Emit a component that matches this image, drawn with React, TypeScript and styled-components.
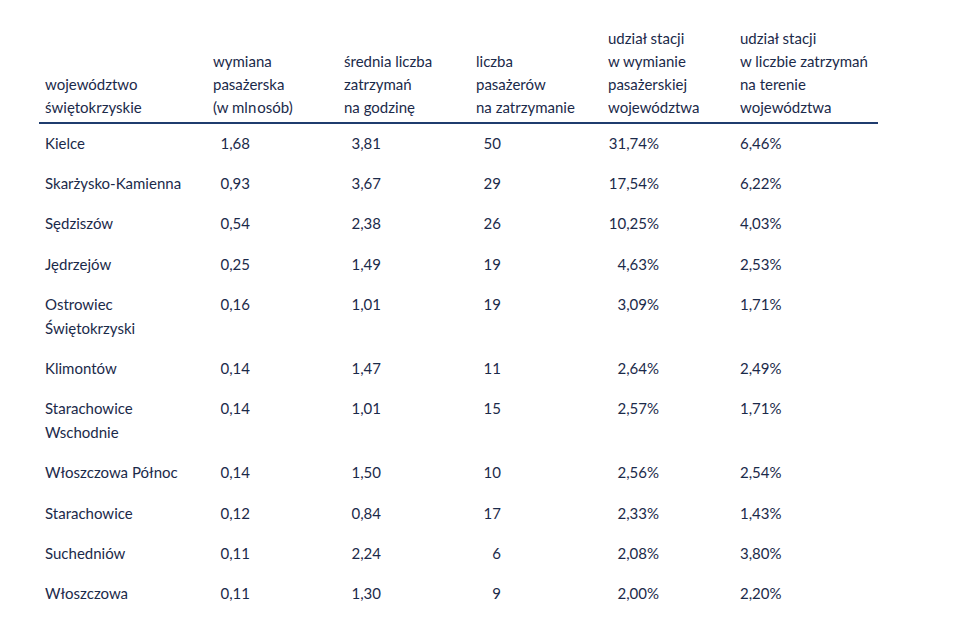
import styled, { createGlobalStyle } from "styled-components";

const GlobalStyle = createGlobalStyle`
  html, body {
    margin: 0;
    padding: 0;
    background: #fff;
  }
  body {
    font-family: Lato, "Liberation Sans", sans-serif;
    color: #1b2a4a;
  }
`;

const Wrapper = styled.div`
  padding: 27px 0 0 39px;
  width: 839px;
`;

const Table = styled.table`
  width: 839px;
  border-collapse: collapse;
  table-layout: fixed;
  font-size: 15px;
`;

const Th = styled.th<{ $w: number }>`
  box-sizing: border-box;
  width: ${(p) => p.$w}px;
  padding: 0 8px 3px 6px;
  text-align: left;
  vertical-align: bottom;
  font-weight: 400;
  line-height: 23px;
  border-bottom: 2px solid #1f3c6e;
`;

const Td = styled.td`
  box-sizing: border-box;
  padding: 7px 8px 9.2px 6px;
  text-align: left;
  vertical-align: top;
  line-height: 24px;
`;

const Num = styled.span<{ $w: number }>`
  display: inline-block;
  width: ${(p) => p.$w}px;
  text-align: right;
`;

const headers = [
  { w: 168, lines: ["województwo", "świętokrzyskie"] },
  { w: 131, lines: ["wymiana", "pasażerska", "(w mln\u200Aosób)"] },
  { w: 132, lines: ["średnia liczba", "zatrzymań", "na godzinę"] },
  { w: 132, lines: ["liczba", "pasażerów", "na zatrzymanie"] },
  { w: 132, lines: ["udział stacji", "w wymianie", "pasażerskiej", "województwa"] },
  { w: 144, lines: ["udział stacji", "w liczbie zatrzymań", "na terenie", "województwa"] },
];

const numWidths = [37, 37, 25, 51, 41];

const rows: string[][] = [
  ["Kielce", "1,68", "3,81", "50", "31,74%", "6,46%"],
  ["Skarżysko-Kamienna", "0,93", "3,67", "29", "17,54%", "6,22%"],
  ["Sędziszów", "0,54", "2,38", "26", "10,25%", "4,03%"],
  ["Jędrzejów", "0,25", "1,49", "19", "4,63%", "2,53%"],
  ["Ostrowiec Świętokrzyski", "0,16", "1,01", "19", "3,09%", "1,71%"],
  ["Klimontów", "0,14", "1,47", "11", "2,64%", "2,49%"],
  ["Starachowice Wschodnie", "0,14", "1,01", "15", "2,57%", "1,71%"],
  ["Włoszczowa Północ", "0,14", "1,50", "10", "2,56%", "2,54%"],
  ["Starachowice", "0,12", "0,84", "17", "2,33%", "1,43%"],
  ["Suchedniów", "0,11", "2,24", "6", "2,08%", "3,80%"],
  ["Włoszczowa", "0,11", "1,30", "9", "2,00%", "2,20%"],
];

function App() {
  return (
    <Wrapper>
      <GlobalStyle />
      <Table>
        <thead>
          <tr>
            {headers.map((h, i) => (
              <Th key={i} $w={h.w}>
                {h.lines.map((l, j) => (
                  <div key={j}>{l}</div>
                ))}
              </Th>
            ))}
          </tr>
        </thead>
        <tbody>
          {rows.map((r) => (
            <tr key={r[0]}>
              <Td>{r[0]}</Td>
              {r.slice(1).map((v, i) => (
                <Td key={i}>
                  <Num $w={numWidths[i]}>{v}</Num>
                </Td>
              ))}
            </tr>
          ))}
        </tbody>
      </Table>
    </Wrapper>
  );
}

export default App;
